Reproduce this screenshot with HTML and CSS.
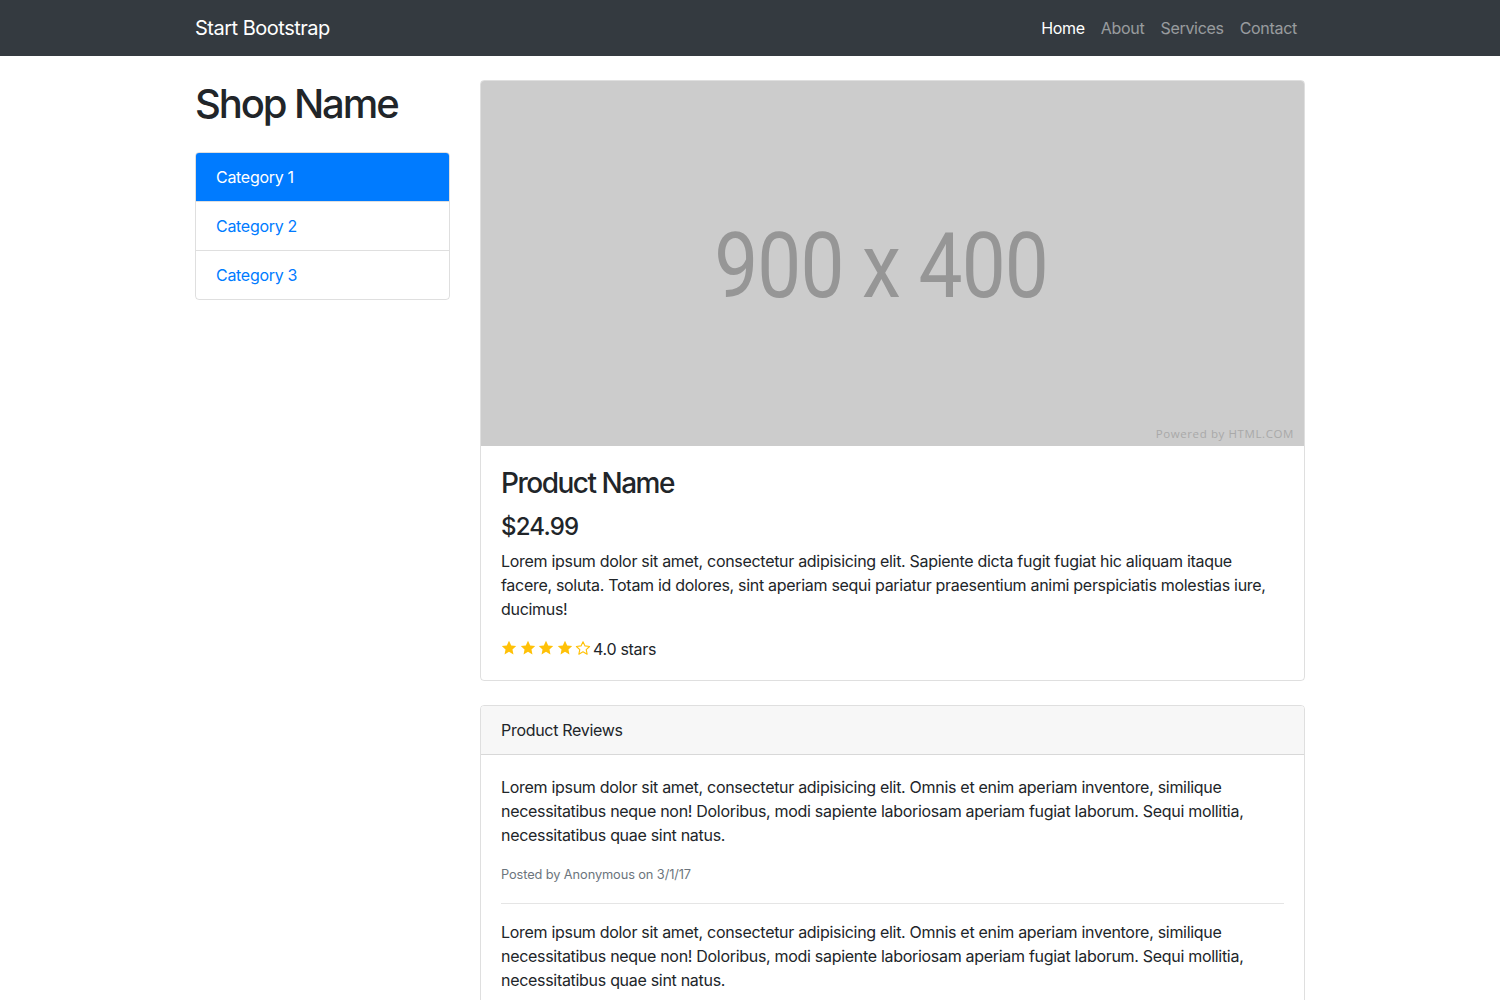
FILE: index.html
```html
<!DOCTYPE html>
<html lang="en">
<head>
<meta charset="utf-8">
<title>Shop Item - Start Bootstrap</title>
<link rel="stylesheet" href="styles.css">
</head>
<body>
<nav class="navbar">
  <div class="container nav-inner">
    <a class="brand" href="#">Start Bootstrap</a>
    <ul class="nav-links">
      <li><a class="nav-link active" href="#">Home</a></li>
      <li><a class="nav-link" href="#">About</a></li>
      <li><a class="nav-link" href="#">Services</a></li>
      <li><a class="nav-link" href="#">Contact</a></li>
    </ul>
  </div>
</nav>

<div class="container main">
  <aside class="sidebar">
    <h1 class="shop-name">Shop Name</h1>
    <div class="list-group">
      <a href="#" class="list-item active">Category 1</a>
      <a href="#" class="list-item">Category 2</a>
      <a href="#" class="list-item">Category 3</a>
    </div>
  </aside>

  <section class="content">
    <div class="card">
      <div class="placeholder">
        <span class="ph-text">900 x 400</span>
        <span class="ph-credit">Powered by HTML.COM</span>
      </div>
      <div class="card-body">
        <h3 class="card-title">Product Name</h3>
        <h4 class="price">$24.99</h4>
        <p class="card-text">Lorem ipsum dolor sit amet, consectetur adipisicing elit. Sapiente dicta fugit fugiat hic aliquam itaque facere, soluta. Totam id dolores, sint aperiam sequi pariatur praesentium animi perspiciatis molestias iure, ducimus!</p>
        <div class="rating">
          <span class="stars">
            <svg class="star" viewBox="0 0 24 24"><path d="M12 1.2l3.3 6.9 7.5.9-5.6 5.1 1.5 7.5L12 17.8l-6.7 3.8 1.5-7.5L1.2 9l7.5-.9z" fill="#ffc107"/></svg>
            <svg class="star" viewBox="0 0 24 24"><path d="M12 1.2l3.3 6.9 7.5.9-5.6 5.1 1.5 7.5L12 17.8l-6.7 3.8 1.5-7.5L1.2 9l7.5-.9z" fill="#ffc107"/></svg>
            <svg class="star" viewBox="0 0 24 24"><path d="M12 1.2l3.3 6.9 7.5.9-5.6 5.1 1.5 7.5L12 17.8l-6.7 3.8 1.5-7.5L1.2 9l7.5-.9z" fill="#ffc107"/></svg>
            <svg class="star" viewBox="0 0 24 24"><path d="M12 1.2l3.3 6.9 7.5.9-5.6 5.1 1.5 7.5L12 17.8l-6.7 3.8 1.5-7.5L1.2 9l7.5-.9z" fill="#ffc107"/></svg>
            <svg class="star" viewBox="0 0 24 24"><path d="M12 2.6l3 6.3 6.9.8-5.1 4.7 1.4 6.9L12 17.8l-6.2 3.5 1.4-6.9-5.1-4.7 6.9-.8z" fill="none" stroke="#ffc107" stroke-width="1.7" stroke-linejoin="round"/></svg>
          </span>
          <span class="rating-text">4.0 stars</span>
        </div>
      </div>
    </div>

    <div class="card reviews">
      <div class="card-header">Product Reviews</div>
      <div class="card-body">
        <p class="review">Lorem ipsum dolor sit amet, consectetur adipisicing elit. Omnis et enim aperiam inventore, similique necessitatibus neque non! Doloribus, modi sapiente laboriosam aperiam fugiat laborum. Sequi mollitia, necessitatibus quae sint natus.</p>
        <small class="meta">Posted by Anonymous on 3/1/17</small>
        <hr class="divider">
        <p class="review">Lorem ipsum dolor sit amet, consectetur adipisicing elit. Omnis et enim aperiam inventore, similique necessitatibus neque non! Doloribus, modi sapiente laboriosam aperiam fugiat laborum. Sequi mollitia, necessitatibus quae sint natus.</p>
        <small class="meta">Posted by Anonymous on 3/1/17</small>
        <hr class="divider">
        <p class="review">Lorem ipsum dolor sit amet, consectetur adipisicing elit. Omnis et enim aperiam inventore, similique necessitatibus neque non! Doloribus, modi sapiente laboriosam aperiam fugiat laborum. Sequi mollitia, necessitatibus quae sint natus.</p>
        <small class="meta">Posted by Anonymous on 3/1/17</small>
        <hr class="divider">
        <a href="#" class="btn">Leave a Review</a>
      </div>
    </div>
  </section>
</div>
</body>
</html>
```
FILE: styles.css
```css
* { box-sizing: border-box; }

html, body {
  margin: 0;
  padding: 0;
}

body {
  font-family: Inter, "Noto Sans", "Liberation Sans", sans-serif;
  font-size: 16px;
  line-height: 1.5;
  color: #212529;
  background: #fff;
  letter-spacing: -0.3px;
}

a { text-decoration: none; }

.container {
  width: 1140px;
  margin: 0 auto;
  padding: 0 15px;
}

/* navbar */
.navbar {
  background: #343a40;
  height: 56px;
}

.nav-inner {
  display: flex;
  align-items: center;
  justify-content: space-between;
  height: 56px;
}

.brand {
  color: #fff;
  font-size: 20px;
  line-height: 30px;
  font-weight: 400;
  letter-spacing: -0.5px;
}

.nav-links {
  display: flex;
  list-style: none;
  margin: 0;
  padding: 0;
}

.nav-link {
  display: block;
  padding: 8px 8px;
  color: rgba(255, 255, 255, 0.5);
  font-size: 16px;
  line-height: 24px;
}

.nav-link.active { color: #fff; }

/* main layout */
.main {
  display: flex;
}

.sidebar {
  width: 255px;
  flex: none;
  margin-right: 30px;
}

.content {
  flex: 1;
  min-width: 0;
}

.shop-name {
  font-size: 40px;
  font-weight: 500;
  line-height: 48px;
  margin: 24px 0;
  letter-spacing: -2.1px;
}

.list-group {
  display: flex;
  flex-direction: column;
  border: 1px solid rgba(0, 0, 0, 0.125);
  border-radius: 4px;
  overflow: hidden;
}

.list-item {
  display: block;
  padding: 12px 20px;
  line-height: 24px;
  color: #007bff;
  border-top: 1px solid rgba(0, 0, 0, 0.125);
}

.list-item:first-child { border-top: none; }

.list-item.active {
  background: #007bff;
  color: #fff;
  margin: -1px -1px 0;
  padding: 13px 21px 12px;
}

/* cards */
.card {
  margin-top: 24px;
  border: 1px solid rgba(0, 0, 0, 0.125);
  border-radius: 4px;
  overflow: hidden;
}

.placeholder {
  position: relative;
  height: 365px;
  background: #cccccc;
  display: flex;
  align-items: center;
  justify-content: center;
}

.ph-text {
  font-family: Roboto, "Liberation Sans", sans-serif;
  font-size: 91px;
  color: #969696;
  line-height: 1;
  margin-right: 23px;
  margin-top: 5px;
  letter-spacing: -1px;
  transform: scaleX(0.86);
}

.ph-credit {
  position: absolute;
  right: 10px;
  bottom: 4px;
  font-family: "Open Sans", "Liberation Sans", sans-serif;
  font-size: 11.5px;
  letter-spacing: 0.6px;
  color: #a9a9a9;
}

.card-body {
  padding: 20px;
}

.card-title {
  font-size: 28px;
  font-weight: 500;
  line-height: 1.2;
  margin: 1px 0 12px;
  letter-spacing: -1.5px;
}

.price {
  font-size: 24px;
  font-weight: 500;
  line-height: 1.2;
  margin: 0 0 8px;
  letter-spacing: -0.8px;
}

.card-text {
  margin: 0 0 16px;
}

.rating {
  display: flex;
  align-items: center;
  height: 23px;
}

.stars {
  display: flex;
  gap: 2.5px;
  margin-right: 2px;
  margin-top: -1px;
}

.star {
  width: 16px;
  height: 16px;
  display: block;
}

.card-header {
  padding: 12px 20px;
  line-height: 24px;
  background: #f7f7f7;
  border-bottom: 1px solid rgba(0, 0, 0, 0.125);
}

.reviews {
  margin-bottom: 24px;
}

.review {
  margin: 0 0 16px;
}

.meta {
  display: block;
  font-size: 12.8px;
  line-height: 24px;
  color: #6c757d;
  letter-spacing: -0.1px;
}

.divider {
  border: 0;
  border-top: 1px solid rgba(0, 0, 0, 0.1);
  margin: 16px 0;
}

.btn {
  display: inline-block;
  padding: 6px 12px;
  background: #28a745;
  color: #fff;
  border-radius: 4px;
}
```
